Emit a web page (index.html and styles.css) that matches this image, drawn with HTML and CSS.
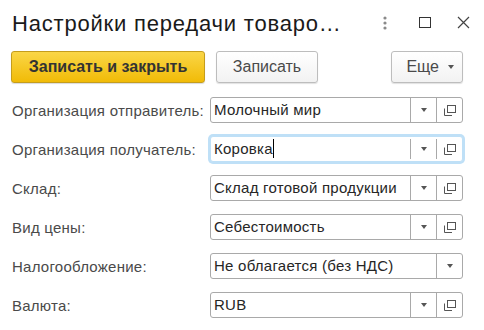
FILE: index.html
```html
<!DOCTYPE html>
<html lang="ru">
<head>
<meta charset="utf-8">
<link rel="stylesheet" href="styles.css">
</head>
<body>
<div class="window">
  <div class="header">
    <div class="title">Настройки передачи товаро…</div>
    <div class="win-icons">
      <svg class="ico-dots" width="6" height="14" viewBox="0 0 6 14"><circle cx="3" cy="2" r="1.6" fill="#8a8a8a"/><circle cx="3" cy="7" r="1.6" fill="#8a8a8a"/><circle cx="3" cy="12" r="1.6" fill="#8a8a8a"/></svg>
      <svg class="ico-max" width="12" height="11" viewBox="0 0 12 11"><rect x="0.5" y="0.5" width="11" height="10" fill="none" stroke="#333" stroke-width="1"/></svg>
      <svg class="ico-close" width="13" height="13" viewBox="0 0 13 13"><path d="M1 1 L12 12 M12 1 L1 12" stroke="#444" stroke-width="1.2" fill="none"/></svg>
    </div>
  </div>
  <div class="toolbar">
    <button class="btn btn-primary">Записать и закрыть</button>
    <button class="btn btn-plain">Записать</button>
    <div class="spacer"></div>
    <button class="btn btn-more">Еще <span class="caret"></span></button>
  </div>
  <div class="form">
    <div class="label">Организация отправитель:</div>
    <div class="field">
      <div class="value">Молочный мир</div>
      <div class="fbtn"><span class="caret"></span></div>
      <div class="fbtn"><svg width="12" height="11" viewBox="0 0 12 11"><rect x="3.5" y="0.5" width="8" height="7" fill="none" stroke="#555"/><path d="M0.5 3.5 V10.5 H8" fill="none" stroke="#555"/></svg></div>
    </div>

    <div class="label">Организация получатель:</div>
    <div class="field focused">
      <div class="value">Коровка<span class="cursor"></span></div>
      <div class="fbtn"><span class="caret"></span></div>
      <div class="fbtn"><svg width="12" height="11" viewBox="0 0 12 11"><rect x="3.5" y="0.5" width="8" height="7" fill="none" stroke="#555"/><path d="M0.5 3.5 V10.5 H8" fill="none" stroke="#555"/></svg></div>
    </div>

    <div class="label">Склад:</div>
    <div class="field">
      <div class="value">Склад готовой продукции</div>
      <div class="fbtn"><span class="caret"></span></div>
      <div class="fbtn"><svg width="12" height="11" viewBox="0 0 12 11"><rect x="3.5" y="0.5" width="8" height="7" fill="none" stroke="#555"/><path d="M0.5 3.5 V10.5 H8" fill="none" stroke="#555"/></svg></div>
    </div>

    <div class="label">Вид цены:</div>
    <div class="field">
      <div class="value">Себестоимость</div>
      <div class="fbtn"><span class="caret"></span></div>
      <div class="fbtn"><svg width="12" height="11" viewBox="0 0 12 11"><rect x="3.5" y="0.5" width="8" height="7" fill="none" stroke="#555"/><path d="M0.5 3.5 V10.5 H8" fill="none" stroke="#555"/></svg></div>
    </div>

    <div class="label">Налогообложение:</div>
    <div class="field">
      <div class="value">Не облагается (без НДС)</div>
      <div class="fbtn"><span class="caret"></span></div>
    </div>

    <div class="label">Валюта:</div>
    <div class="field">
      <div class="value">RUB</div>
      <div class="fbtn"><span class="caret"></span></div>
      <div class="fbtn"><svg width="12" height="11" viewBox="0 0 12 11"><rect x="3.5" y="0.5" width="8" height="7" fill="none" stroke="#555"/><path d="M0.5 3.5 V10.5 H8" fill="none" stroke="#555"/></svg></div>
    </div>
  </div>
</div>
</body>
</html>
```

FILE: styles.css
```css
* { box-sizing: border-box; }
html, body { margin: 0; padding: 0; background: #fff; }
body {
  font-family: "Liberation Sans", Arial, sans-serif;
  color: #333;
  width: 484px;
  height: 330px;
  overflow: hidden;
}
.window { padding: 0 21px 0 11px; }
.header {
  display: flex;
  align-items: center;
  height: 51px;
  padding-bottom: 6px;
}
.title {
  flex: 1;
  font-size: 22px;
  letter-spacing: 0.8px;
  color: #1a1a1a;
  padding-left: 1px;
  padding-top: 3px;
  white-space: nowrap;
}
.win-icons {
  display: flex;
  align-items: center;
  margin-right: -7px;
}
.ico-dots { margin-right: 31px; }
.ico-max { margin-right: 26px; }
.toolbar {
  display: flex;
  align-items: center;
  height: 32px;
}
.spacer { flex: 1; }
.btn {
  font-family: "Liberation Sans", Arial, sans-serif;
  font-size: 16px;
  height: 32px;
  border-radius: 3px;
  padding: 0;
  cursor: default;
}
.btn-primary {
  width: 194px;
  font-weight: bold;
  color: #333;
  background: linear-gradient(#fad647, #f1bb07);
  border: 1px solid #c59d1c;
  box-shadow: 0 1px 1px rgba(0,0,0,0.15);
}
.btn-plain {
  width: 102px;
  margin-left: 11px;
  color: #4a4a4a;
  background: linear-gradient(#fff, #f2f2f2);
  border: 1px solid #bdbdbd;
  box-shadow: 0 1px 1px rgba(0,0,0,0.12);
}
.btn-more {
  width: 72px;
  color: #4a4a4a;
  background: linear-gradient(#fff, #f2f2f2);
  border: 1px solid #bdbdbd;
  box-shadow: 0 1px 1px rgba(0,0,0,0.12);
  display: flex;
  align-items: center;
  justify-content: flex-end;
  padding-right: 8px;
  gap: 9px;
}
.caret {
  display: inline-block;
  width: 0; height: 0;
  border-left: 3.5px solid transparent;
  border-right: 3.5px solid transparent;
  border-top: 4px solid #555;
}
.form {
  display: grid;
  grid-template-columns: 199px 253px;
  row-gap: 13px;
  margin-top: 14px;
  align-items: center;
}
.label {
  font-size: 15px;
  letter-spacing: 0.25px;
  color: #4a4a4a;
  padding-left: 1px;
  white-space: nowrap;
}
.field {
  display: flex;
  height: 26px;
  border: 1px solid #a9a9a9;
  border-radius: 3px;
  background: #fff;
}
.field.focused {
  border-color: #bfe0f7;
  box-shadow: 0 0 0 2px #bfe0f7;
}
.value {
  flex: 1;
  font-size: 15px;
  letter-spacing: 0.25px;
  color: #262626;
  line-height: 24px;
  padding-left: 3px;
  white-space: nowrap;
  overflow: hidden;
}
.cursor {
  display: inline-block;
  width: 1px;
  height: 19px;
  background: #000;
  vertical-align: -4px;
}
.fbtn {
  width: 26px;
  border-left: 1px solid #a9a9a9;
  display: flex;
  align-items: center;
  justify-content: center;
}
.focused .fbtn { margin: 2px 0; }
```
